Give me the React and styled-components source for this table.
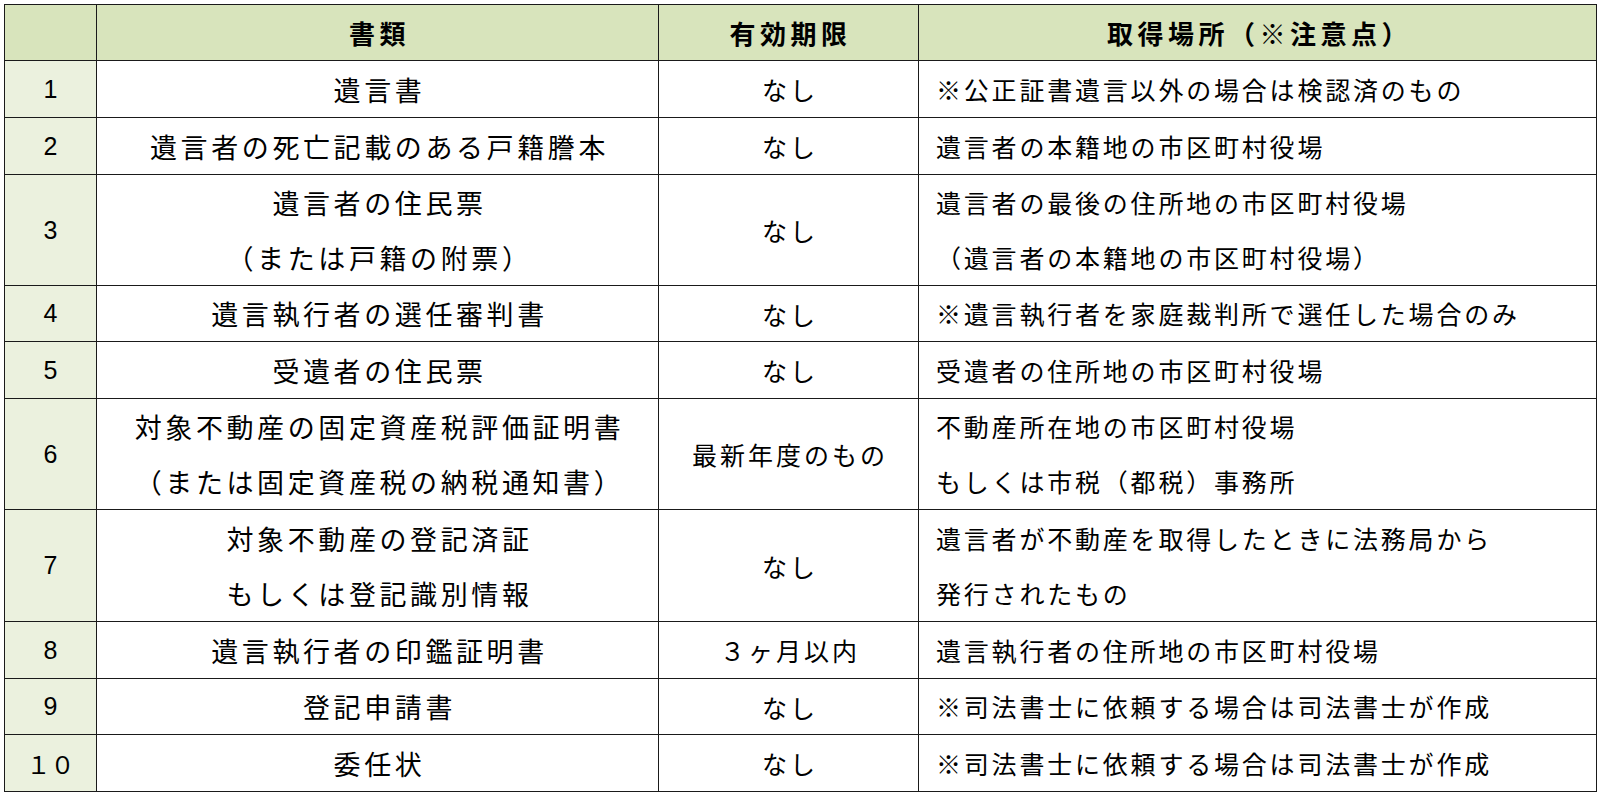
import React from "react";
import styled, { createGlobalStyle } from "styled-components";

const GlobalStyle = createGlobalStyle`
  html, body {
    margin: 0;
    padding: 0;
    background: #fff;
  }
  body {
    font-family: "Noto Sans CJK JP", "Noto Sans", sans-serif;
    color: #000;
  }
`;

const rows = [
  { no: "1", doc: ["遺言書"], term: "なし", place: ["※公正証書遺言以外の場合は検認済のもの"], h: 57 },
  { no: "2", doc: ["遺言者の死亡記載のある戸籍謄本"], term: "なし", place: ["遺言者の本籍地の市区町村役場"], h: 57 },
  { no: "3", doc: ["遺言者の住民票", "（または戸籍の附票）"], term: "なし", place: ["遺言者の最後の住所地の市区町村役場", "（遺言者の本籍地の市区町村役場）"], h: 111 },
  { no: "4", doc: ["遺言執行者の選任審判書"], term: "なし", place: ["※遺言執行者を家庭裁判所で選任した場合のみ"], h: 56 },
  { no: "5", doc: ["受遺者の住民票"], term: "なし", place: ["受遺者の住所地の市区町村役場"], h: 57 },
  { no: "6", doc: ["対象不動産の固定資産税評価証明書", "（または固定資産税の納税通知書）"], term: "最新年度のもの", place: ["不動産所在地の市区町村役場", "もしくは市税（都税）事務所"], h: 111 },
  { no: "7", doc: ["対象不動産の登記済証", "もしくは登記識別情報"], term: "なし", place: ["遺言者が不動産を取得したときに法務局から", "発行されたもの"], h: 112 },
  { no: "8", doc: ["遺言執行者の印鑑証明書"], term: "３ヶ月以内", place: ["遺言執行者の住所地の市区町村役場"], h: 57 },
  { no: "9", doc: ["登記申請書"], term: "なし", place: ["※司法書士に依頼する場合は司法書士が作成"], h: 56 },
  { no: "１０", doc: ["委任状"], term: "なし", place: ["※司法書士に依頼する場合は司法書士が作成"], h: 57 },
];

function Lines({ items }) {
  return items.map((t, i) => <Line key={i}>{t}</Line>);
}

export default function App() {
  return (
    <Page>
      <GlobalStyle />
      <Table>
        <colgroup>
          <col style={{ width: 92 }} />
          <col style={{ width: 562 }} />
          <col style={{ width: 260 }} />
          <col style={{ width: 678 }} />
        </colgroup>
        <thead>
          <HeadRow>
            <HeadCell />
            <HeadCell>書類</HeadCell>
            <HeadCell>有効期限</HeadCell>
            <HeadCell>取得場所（※注意点）</HeadCell>
          </HeadRow>
        </thead>
        <tbody>
          {rows.map((r) => (
            <Row key={r.no} $h={r.h}>
              <NumCell $wide={r.no.length > 1}>{r.no}</NumCell>
              <DocCell>
                <Lines items={r.doc} />
              </DocCell>
              <TermCell>{r.term}</TermCell>
              <PlaceCell>
                <Lines items={r.place} />
              </PlaceCell>
            </Row>
          ))}
        </tbody>
      </Table>
    </Page>
  );
}

const Page = styled.div`
  padding: 4px 8px 6px 4px;
`;

const Table = styled.table`
  width: 1592px;
  table-layout: fixed;
  border-collapse: collapse;
  border: 1.5px solid #000;
`;

const HeadRow = styled.tr`
  height: 56px;
  background: #d8e4bc;
`;

const Cell = styled.td`
  border: 1.5px solid #1a1a1a;
  padding: 0;
  vertical-align: middle;
  color: #000;
  font-weight: 400;
`;

const HeadCell = styled(Cell).attrs({ as: "th" })`
  font-size: 26px;
  font-weight: 700;
  letter-spacing: 4.5px;
  text-align: center;
  padding-left: 4px;
`;

const Row = styled.tr`
  height: ${(p) => p.$h}px;
`;

const NumCell = styled(Cell)`
  background: #ebf1de;
  text-align: center;
  font-family: ${(p) =>
    p.$wide ? `"Noto Sans CJK JP", sans-serif` : `"Liberation Sans", Arial, sans-serif`};
  font-size: ${(p) => (p.$wide ? "24px" : "25px")};
`;

const DocCell = styled(Cell)`
  text-align: center;
  font-size: 27px;
  letter-spacing: 3.6px;
  padding-left: 4px;
`;

const TermCell = styled(Cell)`
  text-align: center;
  font-size: 25px;
  letter-spacing: 3px;
  padding-left: 3px;
`;

const PlaceCell = styled(Cell)`
  text-align: left;
  font-size: 25px;
  letter-spacing: 2.8px;
  padding-left: 17px;
`;

const Line = styled.div`
  line-height: 55px;
  white-space: nowrap;
`;
